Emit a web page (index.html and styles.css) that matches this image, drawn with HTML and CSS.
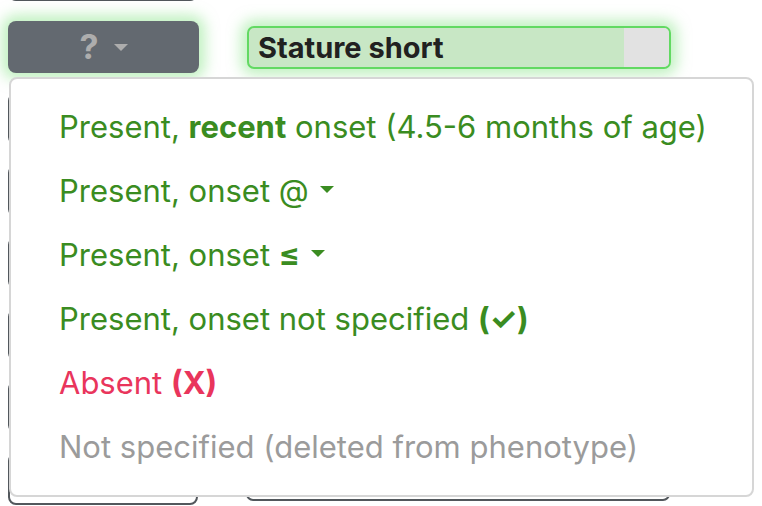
FILE: index.html
```html
<!DOCTYPE html>
<html>
<head>
<meta charset="utf-8">
<link rel="stylesheet" href="styles.css">
</head>
<body>
<div class="page">
  <div class="rows">
    <div class="row"><div class="btn outline"></div><div class="field plain"></div></div>
    <div class="row"><div class="btn active"><span class="q">?</span><span class="caret grey"></span></div><div class="field selected"><span class="label">Stature short</span><span class="addon"></span></div></div>
    <div class="row"><div class="btn outline"></div><div class="field plain"></div></div>
    <div class="row"><div class="btn outline"></div><div class="field plain"></div></div>
    <div class="row"><div class="btn outline"></div><div class="field plain"></div></div>
    <div class="row"><div class="btn outline"></div><div class="field plain"></div></div>
    <div class="row"><div class="btn outline"></div><div class="field plain"></div></div>
    <div class="row"><div class="btn outline"></div><div class="field plain"></div></div>
  </div>
  <div class="menu">
    <div class="item green">Present, <b>recent</b> onset (4.5-6 months of age)</div>
    <div class="item green">Present, onset @<span class="caret green-caret"></span></div>
    <div class="item green">Present, onset <span class="le">≤</span><span class="caret green-caret"></span></div>
    <div class="item green">Present, onset not specified <b>(✓)</b></div>
    <div class="item red">Absent <b>(X)</b></div>
    <div class="item grey-text">Not specified (deleted from phenotype)</div>
  </div>
</div>
</body>
</html>
```
FILE: styles.css
```css
html, body {
  margin: 0;
  padding: 0;
  background: #ffffff;
  overflow: hidden;
}
body {
  width: 762px;
  height: 506px;
  font-family: Inter, "Noto Sans", sans-serif;
}
.page {
  position: relative;
  width: 762px;
  height: 506px;
  overflow: hidden;
}
.rows {
  display: flex;
  flex-direction: column;
  gap: 20px;
  margin-top: -51px;
}
.row {
  display: flex;
  align-items: center;
  height: 52px;
}
.btn {
  box-sizing: border-box;
  width: 190px;
  height: 52px;
  margin-left: 8px;
  border-radius: 8px;
  display: flex;
  align-items: center;
  justify-content: center;
  gap: 15px;
}
.btn.outline {
  border: 2px solid #52575c;
  background: #fff;
}
.btn.active {
  width: 191px;
  background: #636970;
  box-shadow: 0 0 14px 6px rgba(130, 228, 130, 0.5);
}
.q {
  color: #adadad;
  font-weight: 700;
  font-size: 34px;
  line-height: 1;
}
.caret {
  display: inline-block;
  width: 0;
  height: 0;
  border-left: 7.5px solid transparent;
  border-right: 7.5px solid transparent;
}
.caret.grey {
  border-top: 7px solid #adadad;
}
.field {
  box-sizing: border-box;
  margin-left: 48px;
  width: 424px;
  height: 43px;
  border-radius: 7px;
}
.field.plain {
  border: 2px solid #52575c;
  background: #fff;
}
.field.selected {
  display: flex;
  align-items: stretch;
  background: #c8e7c5;
  border: 2px solid #62d962;
  box-shadow: 0 0 14px 6px rgba(130, 228, 130, 0.5);
  overflow: hidden;
}
.label {
  flex: 1;
  display: flex;
  align-items: center;
  padding-left: 9px;
  font-weight: 700;
  font-size: 29px;
  color: #212121;
}
.addon {
  width: 45px;
  background: #e2e2e2;
}
.menu {
  position: absolute;
  left: 9px;
  top: 77px;
  box-sizing: border-box;
  width: 745px;
  height: 420px;
  padding: 16px 0;
  background: #fff;
  border: 2px solid #d6d6d6;
  border-radius: 8px;
}
.item {
  padding: 8px 48px;
  font-size: 31px;
  line-height: 48px;
  white-space: nowrap;
}
.item b {
  font-weight: 700;
}
.le {
  font-weight: 700;
}
.green { color: #3a8c21; }
.red { color: #e9355c; }
.grey-text { color: #9b9b9b; }
.green-caret {
  margin-left: 11px;
  vertical-align: 9px;
  border-left: 7px solid transparent;
  border-right: 7px solid transparent;
  border-top: 7px solid #3a8c21;
}
```
